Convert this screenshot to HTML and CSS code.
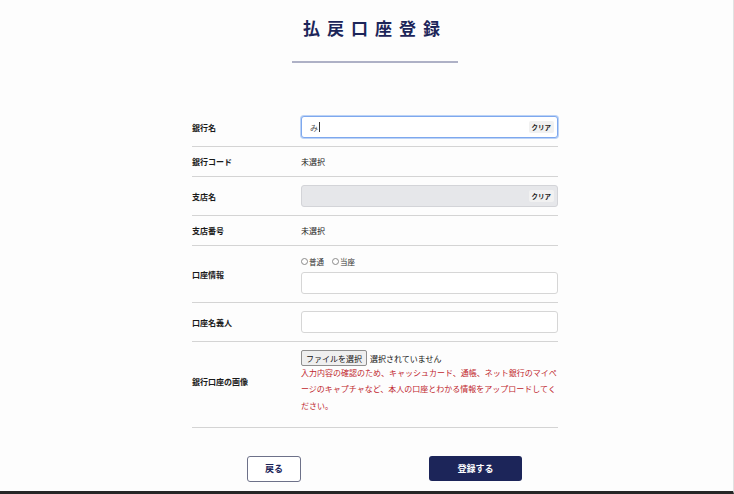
FILE: index.html
```html
<!DOCTYPE html>
<html lang="ja">
<head>
  <meta charset="UTF-8">
  <title>払戻口座登録</title>
  <link rel="stylesheet" href="styles.css">
</head>
<body>
  <div class="container">
    <h1 class="title">払戻口座登録</h1>
    <div class="title-line"></div>

    <div class="form">
      <!-- 銀行名 -->
      <div class="row">
        <div class="label">銀行名</div>
        <div class="value">
          <div class="field">
            <div class="input is-focused"><span class="composing">み</span><span class="caret"></span></div>
            <button class="clear">クリア</button>
          </div>
        </div>
      </div>

      <div class="row">
        <div class="label">銀行コード</div>
        <div class="value text">未選択</div>
      </div>

      <!-- 支店名 -->
      <div class="row">
        <div class="label">支店名</div>
        <div class="value">
          <div class="field">
            <div class="input is-disabled"></div>
            <button class="clear">クリア</button>
          </div>
        </div>
      </div>

      <div class="row">
        <div class="label">支店番号</div>
        <div class="value text">未選択</div>
      </div>

      <!-- 口座情報 -->
      <div class="row">
        <div class="label">口座情報</div>
        <div class="value">
          <div class="radios">
            <label class="radio"><input type="radio" name="kind">普通</label>
            <label class="radio"><input type="radio" name="kind">当座</label>
          </div>
          <div class="input"></div>
        </div>
      </div>

      <div class="row">
        <div class="label">口座名義人</div>
        <div class="value">
          <div class="input"></div>
        </div>
      </div>

      <!-- 画像 -->
      <div class="row row-image">
        <div class="label">銀行口座の画像</div>
        <div class="value">
          <div class="file">
            <button class="file-button">ファイルを選択</button>
            <span class="file-name">選択されていません</span>
          </div>
          <p class="note">入力内容の確認のため、キャッシュカード、通帳、ネット銀行のマイページのキャプチャなど、本人の口座とわかる情報をアップロードしてください。</p>
        </div>
      </div>
    </div>

    <div class="actions">
      <button class="btn btn-back">戻る</button>
      <button class="btn btn-submit">登録する</button>
    </div>
  </div>
</body>
</html>
```

FILE: styles.css
```css
html {
  height: 100%;
}

body {
  margin: 0;
  height: 100%;
  box-sizing: border-box;
  border-bottom: 3px solid #262626;
  border-right: 1px solid #e2e2e2;
  background-color: #fdfdfd;
  color: #222;
  font-family: "Noto Sans CJK JP", "Noto Sans", sans-serif;
}

.container {
  width: 366px;
  margin-left: 192px;
  padding-top: 16px;
}

.title {
  margin: 0;
  text-align: center;
  font-size: 17px;
  line-height: 24px;
  font-weight: bold;
  letter-spacing: 7px;
  color: #1c2559;
}

.title-line {
  width: 166px;
  height: 2px;
  margin: 21px auto 0;
  background-color: #aeb1c6;
}

.form {
  margin-top: 45px;
}

.row {
  display: grid;
  grid-template-columns: 109px 1fr;
  align-items: center;
  padding: 8px 0;
  border-bottom: 1px solid #d4d4d4;
}

.label {
  font-size: 8px;
  line-height: 13px;
  font-weight: bold;
  color: #1a1a1a;
}

.value.text {
  font-size: 8px;
  line-height: 13px;
  color: #1a1a1a;
}

.field {
  position: relative;
}

.input {
  box-sizing: border-box;
  height: 22px;
  border: 1px solid #d6d6d6;
  border-radius: 3px;
  background-color: #fff;
  padding: 0 8px;
  display: flex;
  align-items: center;
}

.input.is-focused {
  border-color: #7ea8ee;
  box-shadow: 0 0 0 1px #bcd3f6;
}

.input.is-disabled {
  background-color: #e6e7ea;
  border-color: #d3d4d8;
}

.composing {
  font-size: 8px;
  color: #555;
}

.caret {
  width: 1px;
  height: 10px;
  margin-left: 1px;
  background-color: #333;
}

.clear {
  position: absolute;
  top: 5px;
  right: 4px;
  border: none;
  border-radius: 2px;
  background-color: #f1f1f1;
  padding: 1px 3px;
  font-family: inherit;
  font-size: 6.5px;
  line-height: 10px;
  font-weight: bold;
  color: #222;
}

.radios {
  display: flex;
  gap: 8px;
  height: 14px;
  margin-bottom: 4px;
  align-items: center;
}

.radio {
  display: flex;
  align-items: center;
  font-size: 7.5px;
  color: #333;
}

.radio input {
  appearance: none;
  width: 7px;
  height: 7px;
  margin: 0 1px 0 0;
  border: 1px solid #8a8a8a;
  border-radius: 50%;
  background-color: #fff;
}

.row-image {
  padding-bottom: 13px;
}

.file {
  display: flex;
  align-items: center;
  gap: 3px;
}

.file-button {
  box-sizing: border-box;
  height: 16px;
  padding: 0 4px;
  border: 1px solid #8f8f8f;
  border-radius: 2px;
  background-color: #efefef;
  font-family: inherit;
  font-size: 8px;
  color: #111;
}

.file-name {
  font-size: 8px;
  color: #111;
}

.note {
  margin: -1px 0 0;
  font-size: 8px;
  line-height: 16.3px;
  color: #c0262d;
}

.actions {
  display: flex;
  margin-top: 28px;
  padding-left: 55px;
  gap: 128px;
}

.btn {
  box-sizing: border-box;
  height: 26px;
  border-radius: 3px;
  font-family: inherit;
  font-size: 9px;
  font-weight: bold;
  cursor: pointer;
}

.btn-back {
  width: 54px;
  border: 1px solid #6d7189;
  background-color: #fff;
  color: #1c2559;
}

.btn-submit {
  width: 93px;
  height: 25px;
  border: none;
  background-color: #1c2559;
  color: #fff;
}
```
